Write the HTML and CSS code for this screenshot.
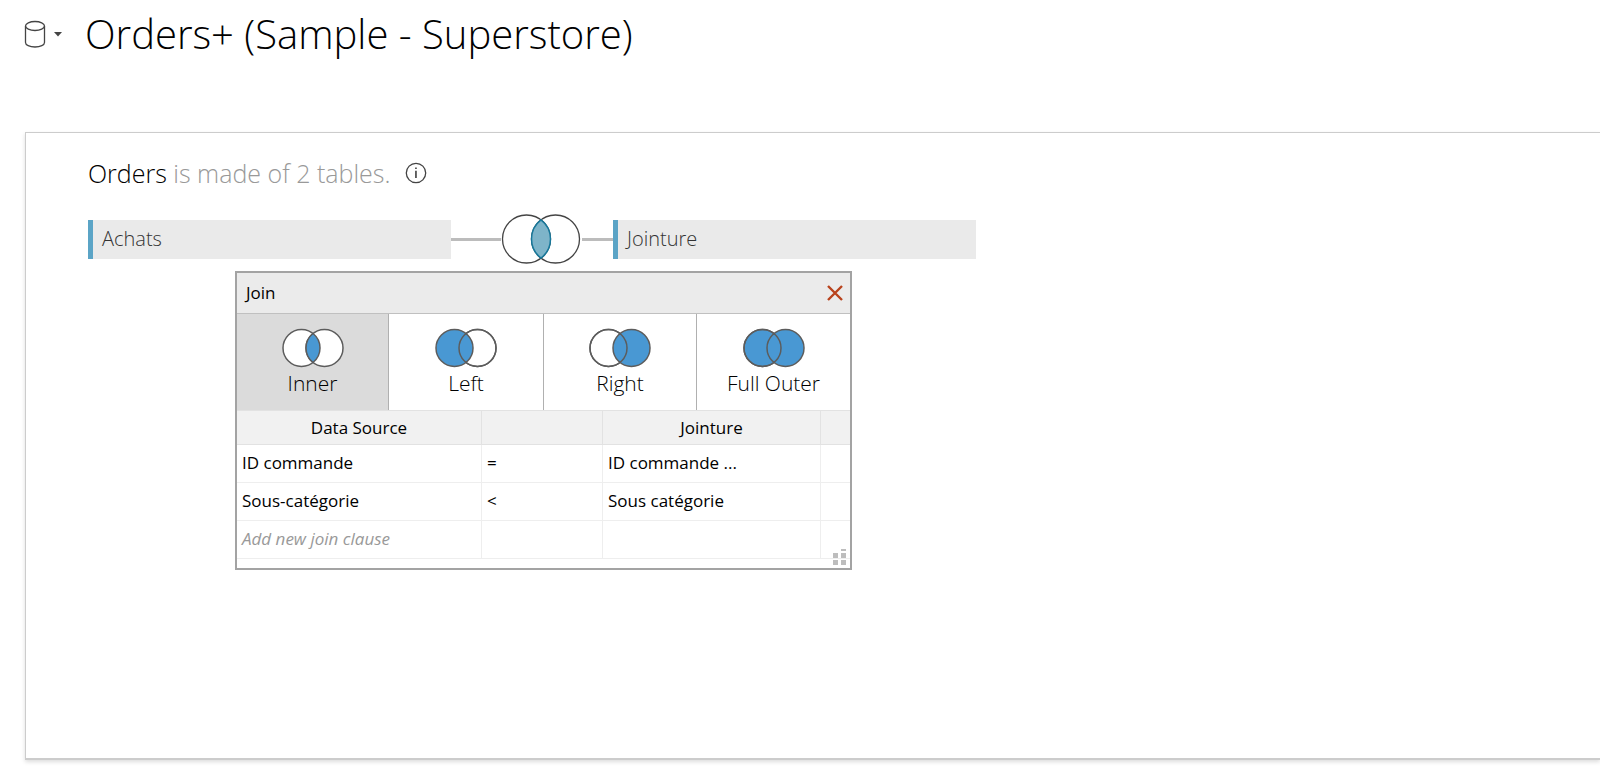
FILE: index.html
```html
<!DOCTYPE html>
<html lang="en">
<head>
<meta charset="utf-8">
<meta name="viewport" content="width=device-width, initial-scale=1">
<title>Orders+ (Sample - Superstore)</title>
<link rel="stylesheet" href="styles.css">
</head>
<body>
<header class="page-header">
  <button class="source-button" type="button" aria-label="Data source menu">
    <svg class="source-icon" width="22" height="28" viewBox="0 0 22 28" aria-hidden="true">
      <path d="M1.5 6v16.500C1.500 25 5.500 27 11 27s9.500-2 9.500-4.500V6"/>
      <ellipse cx="11" cy="6" rx="9.500" ry="4.500"/>
    </svg>
    <svg class="caret" width="8" height="5" viewBox="0 0 8 5" aria-hidden="true"><path d="M0 0h8L4 4.500z"/></svg>
  </button>
  <h1 class="title">Orders+ (Sample - Superstore)</h1>
</header>

<main class="canvas">
  <div class="summary">
    <h2 class="summary-text"><span class="summary-name">Orders</span> is made of 2 tables.</h2>
    <button class="info-button" type="button" aria-label="Information">
      <svg width="22" height="22" viewBox="0 0 22 22" aria-hidden="true">
        <circle cx="11" cy="11" r="9.700" fill="none" stroke="#444" stroke-width="1.300"/>
        <path d="M10.200 5.500h1.500v1.600h-1.500zM10.200 8.800h1.500v7.200h-1.500z" fill="#333"/>
      </svg>
    </button>
  </div>

  <div class="join-row">
    <div class="node">Achats</div>
    <div class="link link-left"></div>
    <button class="join-button" type="button" aria-label="Edit join">
      <svg width="80" height="50" viewBox="0 0 80 50" aria-hidden="true">
        <circle class="ring" cx="25.500" cy="25" r="24"/>
        <circle class="ring" cx="54.500" cy="25" r="24"/>
        <path class="join-lens" d="M40 5.880A24 24 0 0 1 40 44.120A24 24 0 0 1 40 5.880z"/>
      </svg>
    </button>
    <div class="link link-right"></div>
    <div class="node">Jointure</div>
  </div>

  <section class="dialog" role="dialog" aria-labelledby="dialog-title">
    <div class="dialog-header">
      <h3 class="dialog-title" id="dialog-title">Join</h3>
      <button class="close-button" type="button" aria-label="Close">
        <svg width="16" height="16" viewBox="0 0 16 16" aria-hidden="true"><path d="M1 1l14 14M15 1L1 15"/></svg>
      </button>
    </div>
    <div class="join-types">
      <button class="join-type selected" type="button" aria-pressed="true">
        <svg class="venn" width="62" height="40" viewBox="0 0 62 40" aria-hidden="true">
          <circle class="empty" cx="19.500" cy="20" r="18.500"/><circle class="empty" cx="42.500" cy="20" r="18.500"/>
          <path class="full" d="M31 5.510A18.500 18.500 0 0 1 31 34.490A18.500 18.500 0 0 1 31 5.510z"/>
        </svg>
        <span>Inner</span>
      </button>
      <button class="join-type" type="button" aria-pressed="false">
        <svg class="venn" width="62" height="40" viewBox="0 0 62 40" aria-hidden="true">
          <circle class="empty" cx="42.500" cy="20" r="18.500"/><circle class="full" cx="19.500" cy="20" r="18.500"/><circle class="outline" cx="42.500" cy="20" r="18.500"/>
        </svg>
        <span>Left</span>
      </button>
      <button class="join-type" type="button" aria-pressed="false">
        <svg class="venn" width="62" height="40" viewBox="0 0 62 40" aria-hidden="true">
          <circle class="empty" cx="19.500" cy="20" r="18.500"/><circle class="full" cx="42.500" cy="20" r="18.500"/><circle class="outline" cx="19.500" cy="20" r="18.500"/>
        </svg>
        <span>Right</span>
      </button>
      <button class="join-type" type="button" aria-pressed="false">
        <svg class="venn" width="62" height="40" viewBox="0 0 62 40" aria-hidden="true">
          <circle class="full" cx="19.500" cy="20" r="18.500"/><circle class="full" cx="42.500" cy="20" r="18.500"/><circle class="outline" cx="19.500" cy="20" r="18.500"/>
        </svg>
        <span>Full Outer</span>
      </button>
    </div>
    <table class="clauses">
      <colgroup><col class="col-source"><col class="col-operator"><col class="col-target"><col class="col-action"></colgroup>
      <thead><tr><th scope="col">Data Source</th><th></th><th scope="col">Jointure</th><th></th></tr></thead>
      <tbody>
        <tr><td>ID commande</td><td>=</td><td>ID commande ...</td><td></td></tr>
        <tr><td>Sous-catégorie</td><td>&lt;</td><td>Sous catégorie</td><td></td></tr>
        <tr><td class="placeholder">Add new join clause</td><td></td><td></td><td></td></tr>
      </tbody>
    </table>
    <svg class="grip" width="13" height="17" viewBox="0 0 13 17" aria-hidden="true">
      <path d="M8 0h5v2H8zM0 4h5v5H0zM8 4h5v5H8zM0 11h5v5H0zM8 11h5v5H8z"/>
    </svg>
  </section>
</main>
</body>
</html>
```
FILE: styles.css
```css
* { box-sizing: border-box; }

body {
  margin: 0;
  min-height: 100vh;
  display: flex;
  flex-direction: column;
  overflow-x: hidden;
  background: #fff;
  color: #000;
  font-family: "Open Sans", "Noto Sans", sans-serif;
  font-weight: 300;
}

button {
  margin: 0;
  padding: 0;
  border: 0;
  background: none;
  color: inherit;
  font: inherit;
}

h1, h2, h3 { margin: 0; font-weight: 300; }
svg { display: block; }

.page-header {
  display: flex;
  align-items: center;
  gap: 23px;
  height: 132px;
  padding: 0 24px 64px;
}

.source-button { display: flex; align-items: center; gap: 8px; }
.source-icon { fill: none; stroke: #444; stroke-width: 1.3; }
.caret { fill: #444; }
.title { font-size: 40px; line-height: 48px; white-space: nowrap; }

.canvas {
  position: relative;
  flex: 1;
  margin: 0 0 14px 25px;
  padding: 22px 62px;
  border: solid #ccc;
  border-width: 1px 0 2px 1px;
  box-shadow: 0 2px 4px #ddd;
}

.summary { display: flex; align-items: center; gap: 15px; height: 36px; }
.summary-text { color: #999; font-size: 25px; line-height: 36px; white-space: nowrap; }
.summary-name { color: #000; }

.join-row { display: flex; align-items: center; margin-top: 23px; }

.node {
  flex: 0 1 363px;
  height: 39px;
  padding-left: 9px;
  border-left: 5px solid #5ba4c6;
  background: #eaeaea;
  color: #333;
  font-size: 20px;
  line-height: 38px;
}

.link { height: 3px; background: #bcbcbc; }
.link-left { width: 50px; }
.link-right { width: 31px; }
.join-button { width: 81px; }
.ring { fill: #fff; stroke: #444; stroke-width: 1.3; }
.ring + .ring { fill: none; }
.join-lens { fill: #7eb4c9; stroke: #17789b; stroke-width: 1.5; }

.dialog {
  position: absolute;
  top: 138px;
  left: 209px;
  width: 617px;
  padding-bottom: 9px;
  border: 2px solid #a3a3a3;
  background: #fff;
}

.dialog-header {
  display: flex;
  align-items: center;
  justify-content: space-between;
  height: 41px;
  padding: 0 7px 0 9px;
  border-bottom: 1px solid #c0c0c0;
  background: #ebebeb;
}

.dialog-title { font-size: 17px; font-weight: 400; line-height: 24px; }
.close-button svg { fill: none; stroke: #b9431d; stroke-width: 2.4; }

.join-types { display: grid; grid-template-columns: 152px 155px 153px 1fr; }

.join-type {
  display: flex;
  flex-direction: column;
  align-items: center;
  height: 96px;
  padding-top: 14px;
  border-right: 1px solid #b0b0b0;
  font-size: 21px;
  line-height: 30px;
}

.join-type:last-child { border-right: 0; }
.selected { background: #dbdbdb; }
.venn { stroke: #5c5c5c; stroke-width: 1.5; }
.empty { fill: #fff; }
.full { fill: #4998d3; }
.outline { fill: none; }

.clauses {
  width: 100%;
  table-layout: fixed;
  border-collapse: separate;
  border-spacing: 0;
  font-size: 17px;
  font-weight: 400;
  line-height: 24px;
}

.col-source { width: 245px; }
.col-operator { width: 121px; }
.col-target { width: 218px; }

.clauses th {
  height: 35px;
  padding: 1px 5px 0;
  border: solid #e2e2e2;
  border-width: 1px 1px 1px 0;
  background: #f1f1f1;
  font-weight: 400;
}

.clauses td {
  height: 38px;
  padding: 0 5px 2px;
  border: solid #eee;
  border-width: 0 1px 1px 0;
}

.clauses th:last-child, .clauses td:last-child { border-right: 0; }
.clauses .placeholder { color: #999; font-style: italic; }
.grip { position: absolute; right: 4px; bottom: 2px; fill: #bdbdbd; }
```
